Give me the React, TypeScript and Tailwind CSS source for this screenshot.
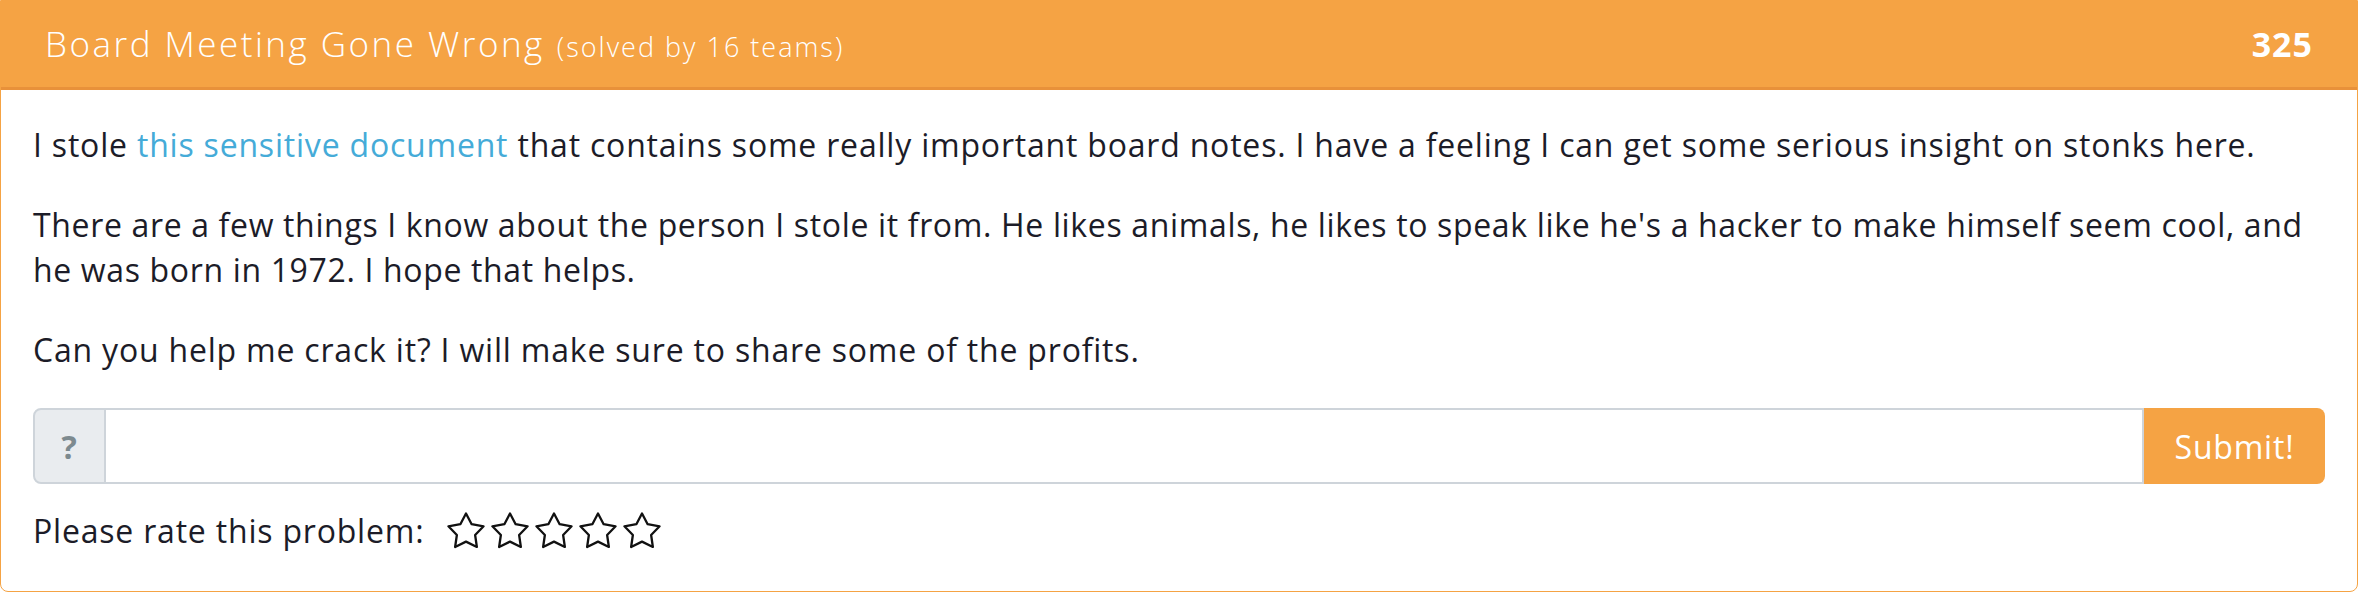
import { useState } from "react";

const FONT = { fontFamily: '"Open Sans", "Liberation Sans", sans-serif' };

function StarIcon() {
  // outline star, fat inner radius and rounded joins
  const pts: string[] = [];
  for (let i = 0; i < 10; i++) {
    const r = i % 2 === 0 ? 18.5 : 9.6;
    const a = (Math.PI / 5) * i - Math.PI / 2;
    pts.push(`${(20 + r * Math.cos(a)).toFixed(2)},${(21 + r * Math.sin(a)).toFixed(2)}`);
  }
  return (
    <svg width="40" height="40" viewBox="0 0 40 40" fill="none">
      <polygon points={pts.join(" ")} stroke="#111" strokeWidth="2.3" strokeLinejoin="round" />
    </svg>
  );
}

export default function App() {
  const [flag, setFlag] = useState("");

  return (
    <div className="w-[2358px] h-[594px] bg-white" style={FONT}>
      <div className="border border-[#f5a344] rounded-b-[8px] overflow-hidden">
        {/* 헤더 */}
        <div className="h-[89px] bg-[#f5a344] border-b-[3px] border-[#e8913a] flex items-center justify-between px-[44px] text-white">
          <div className="flex items-baseline">
            <span className="text-[35px] font-light tracking-[2.5px]">Board Meeting Gone Wrong</span>
            <span className="text-[27px] font-light tracking-[2px] ml-[12px]">(solved by 16 teams)</span>
          </div>
          <span className="text-[34px] font-bold tracking-[1px]">325</span>
        </div>

        {/* 본문 */}
        <div className="px-[32px] pt-[32px] pb-[38px] text-[32px] leading-[45px] text-[#1c1c28] tracking-[0.8px]">
          <p className="mb-[35px]">
            I stole <a href="#" className="text-[#45abd8]">this sensitive document</a> that contains some really
            important board notes. I have a feeling I can get some serious insight on stonks here.
          </p>
          <p className="mb-[35px] tracking-[0.65px]">
            There are a few things I know about the person I stole it from. He likes animals, he likes to speak like
            he's a hacker to make himself seem cool, and he was born in 1972. I hope that helps.
          </p>
          <p className="mb-[36px]">Can you help me crack it? I will make sure to share some of the profits.</p>

          <div className="flex h-[76px]">
            <div className="w-[73px] flex items-center justify-center bg-[#e9ecef] border-2 border-[#ced4da] rounded-l-[8px] text-[#7d8a8f] font-bold text-[32px]">
              ?
            </div>
            <input
              value={flag}
              onChange={(e) => setFlag(e.target.value)}
              className="flex-1 border-2 border-l-0 border-[#ced4da] outline-none px-4 text-[32px]"
            />
            <button className="w-[181px] bg-[#f5a344] text-white rounded-r-[8px] text-[32px]">
              Submit!
            </button>
          </div>

          <div className="flex items-center mt-[24px]">
            <span>Please rate this problem:</span>
            <div className="flex gap-[4px] ml-[22px]">
              {[1, 2, 3, 4, 5].map((n) => (
                <StarIcon key={n} />
              ))}
            </div>
          </div>
        </div>
      </div>
    </div>
  );
}
